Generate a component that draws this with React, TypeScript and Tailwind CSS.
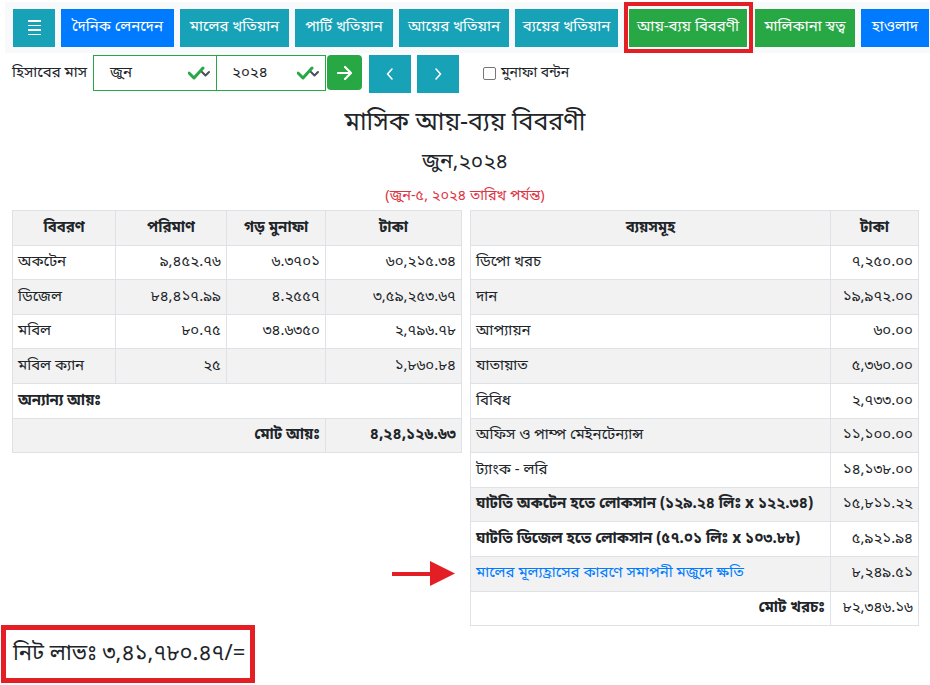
import React from "react";

const FONT = { fontFamily: '"Noto Sans Bengali", "Noto Sans", "Liberation Sans", sans-serif' };

function Check() {
  return (
    <svg width="24" height="14" viewBox="0 0 24 14" className="shrink-0">
      <polyline points="1,7 6,12 15,2" fill="none" stroke="#28a745" strokeWidth="3" strokeLinecap="round" strokeLinejoin="round" />
      <polyline points="14,6 17.5,9.5 21,6" fill="none" stroke="#495057" strokeWidth="2" strokeLinecap="round" strokeLinejoin="round" />
    </svg>
  );
}

const leftRows = [
  ["অকটেন", "৯,৪৫২.৭৬", "৬.৩৭০১", "৬০,২১৫.৩৪"],
  ["ডিজেল", "৮৪,৪১৭.৯৯", "৪.২৫৫৭", "৩,৫৯,২৫৩.৬৭"],
  ["মবিল", "৮০.৭৫", "৩৪.৬৩৫০", "২,৭৯৬.৭৮"],
  ["মবিল ক্যান", "২৫", "", "১,৮৬০.৮৪"],
];

const rightRows: [string, string, string][] = [
  ["ডিপো খরচ", "৭,২৫০.০০", "n"],
  ["দান", "১৯,৯৭২.০০", "n"],
  ["আপ্যায়ন", "৬০.০০", "n"],
  ["যাতায়াত", "৫,৩৬০.০০", "n"],
  ["বিবিধ", "২,৭৩৩.০০", "n"],
  ["অফিস ও পাম্প মেইনটেন্যান্স", "১১,১০০.০০", "n"],
  ["ট্যাংক - লরি", "১৪,১৩৮.০০", "n"],
  ["ঘাটতি অকটেন হতে লোকসান (১২৯.২৪ লিঃ x ১২২.৩৪)", "১৫,৮১১.২২", "b"],
  ["ঘাটতি ডিজেল হতে লোকসান (৫৭.০১ লিঃ x ১০৩.৮৮)", "৫,৯২১.৯৪", "b"],
  ["মালের মূল্যহ্রাসের কারণে সমাপনী মজুদে ক্ষতি", "৮,২৪৯.৫১", "l"],
];

const cell = "border border-[#dee2e6] px-[5px] h-[34.6px] align-middle";

export default function App() {
  return (
    <div className="w-[930px] h-[685px] overflow-hidden bg-white text-[#212529]" style={FONT}>
      {/* nav */}
      <div className="ml-[5px] mt-[2px] h-[51px] bg-[#f8f9fa] flex items-center pl-[8px] text-white text-[15px] whitespace-nowrap">
        <div className="w-[42px] h-[38px] bg-[#17a2b8] flex flex-col items-center justify-center gap-[3px]">
          <span className="block w-[13px] h-[1.5px] bg-white" />
          <span className="block w-[13px] h-[1.5px] bg-white" />
          <span className="block w-[13px] h-[1.5px] bg-white" />
          <span className="block w-[13px] h-[1.5px] bg-white" />
        </div>
        <div className="ml-[6px] w-[113px] h-[38px] bg-[#007bff] flex items-center justify-center">দৈনিক লেনদেন</div>
        <div className="ml-[6px] w-[109px] h-[38px] bg-[#17a2b8] flex items-center justify-center">মালের খতিয়ান</div>
        <div className="ml-[6px] w-[98px] h-[38px] bg-[#17a2b8] flex items-center justify-center">পার্টি খতিয়ান</div>
        <div className="ml-[6px] w-[110px] h-[38px] bg-[#17a2b8] flex items-center justify-center">আয়ের খতিয়ান</div>
        <div className="ml-[6px] w-[103px] h-[38px] bg-[#17a2b8] flex items-center justify-center">ব্যয়ের খতিয়ান</div>
        <div className="relative ml-[11px] w-[118px] h-[38px] bg-[#28a745] flex items-center justify-center">
          আয়-ব্যয় বিবরণী
          <div className="absolute -left-[5px] -right-[6px] -top-[7px] -bottom-[6px] border-[4px] border-[#e31e24]" />
        </div>
        <div className="ml-[8px] w-[100px] h-[38px] bg-[#28a745] flex items-center justify-center">মালিকানা স্বত্ব</div>
        <div className="ml-[6px] w-[68px] h-[38px] bg-[#007bff] flex items-center justify-center shrink-0">হাওলাদ</div>
      </div>

      {/* filter row */}
      <div className="mt-[2px] flex items-start h-[38px] text-[15px]">
        <div className="ml-[12px] w-[81px] h-[36px] flex items-center">হিসাবের মাস</div>
        <div className="w-[124px] h-[36px] border border-[#28a745] flex items-center justify-between pl-[16px] pr-[4px]">
          <span>জুন</span>
          <Check />
        </div>
        <div className="w-[109px] h-[36px] border border-[#28a745] border-l-0 flex items-center justify-between pl-[15px] pr-[4px]">
          <span>২০২৪</span>
          <Check />
        </div>
        <div className="ml-[1px] w-[35px] h-[35px] rounded-[4px] bg-[#28a745] flex items-center justify-center">
          <svg width="18" height="16" viewBox="0 0 18 16">
            <path d="M2 8h13M9 2l6 6-6 6" fill="none" stroke="white" strokeWidth="2.2" strokeLinecap="round" strokeLinejoin="round" />
          </svg>
        </div>
        <div className="ml-[7px] w-[42px] h-[38px] bg-[#17a2b8] flex items-center justify-center">
          <svg width="10" height="16" viewBox="0 0 10 16">
            <path d="M7 3L2.5 8 7 13" fill="none" stroke="white" strokeWidth="1.6" strokeLinecap="round" strokeLinejoin="round" />
          </svg>
        </div>
        <div className="ml-[6px] w-[42px] h-[38px] bg-[#17a2b8] flex items-center justify-center">
          <svg width="10" height="16" viewBox="0 0 10 16">
            <path d="M3 3l4.5 5L3 13" fill="none" stroke="white" strokeWidth="1.6" strokeLinecap="round" strokeLinejoin="round" />
          </svg>
        </div>
        <label className="ml-[24px] h-[36px] flex items-center gap-[5px] text-[14px]">
          <span className="block w-[13px] h-[13px] border border-[#767676] rounded-[2px] bg-white" />
          মুনাফা বন্টন
        </label>
      </div>

      {/* titles */}
      <div className="text-center">
        <div className="text-[25px] leading-[34px] mt-[14px]">মাসিক আয়-ব্যয় বিবরণী</div>
        <div className="text-[21px] leading-[30px] mt-[7px]">জুন,২০২৪</div>
        <div className="text-[14.5px] leading-[20px] mt-[9px] text-[#dc3545]">(জুন-৫, ২০২৪ তারিখ পর্যন্ত)</div>
      </div>

      {/* tables */}
      <div className="relative flex items-start gap-[8px] pl-[12px] mt-[3px] text-[15px]">
        <table className="w-[449px] border-collapse table-fixed">
          <colgroup>
            <col className="w-[103px]" />
            <col className="w-[111px]" />
            <col className="w-[99px]" />
            <col className="w-[136px]" />
          </colgroup>
          <tbody>
            <tr className="bg-[#f2f2f2] font-bold">
              <td className={`${cell} text-center`}>বিবরণ</td>
              <td className={`${cell} text-center`}>পরিমাণ</td>
              <td className={`${cell} text-center`}>গড় মুনাফা</td>
              <td className={`${cell} text-center`}>টাকা</td>
            </tr>
            {leftRows.map((r, i) => (
              <tr key={i} className={i % 2 === 1 ? "bg-[#f2f2f2]" : "bg-white"}>
                <td className={cell}>{r[0]}</td>
                <td className={`${cell} text-right`}>{r[1]}</td>
                <td className={`${cell} text-right`}>{r[2]}</td>
                <td className={`${cell} text-right`}>{r[3]}</td>
              </tr>
            ))}
            <tr className="bg-white">
              <td colSpan={4} className={`${cell} font-bold`}>অন্যান্য আয়ঃ</td>
            </tr>
            <tr className="bg-[#f2f2f2] font-bold">
              <td colSpan={3} className={`${cell} text-right`}>মোট আয়ঃ</td>
              <td className={`${cell} text-right`}>৪,২৪,১২৬.৬৩</td>
            </tr>
          </tbody>
        </table>

        <table className="w-[448px] border-collapse table-fixed">
          <colgroup>
            <col className="w-[360px]" />
            <col className="w-[88px]" />
          </colgroup>
          <tbody>
            <tr className="bg-[#f2f2f2] font-bold">
              <td className={`${cell} text-center`}>ব্যয়সমূহ</td>
              <td className={`${cell} text-center`}>টাকা</td>
            </tr>
            {rightRows.map((r, i) => (
              <tr key={i} className={i % 2 === 1 ? "bg-[#f2f2f2]" : "bg-white"}>
                <td
                  className={`${cell} whitespace-nowrap ${r[2] === "b" ? "font-bold" : ""} ${r[2] === "l" ? "text-[#007bff]" : ""}`}
                >
                  {r[0]}
                </td>
                <td className={`${cell} text-right`}>{r[1]}</td>
              </tr>
            ))}
            <tr className="bg-white">
              <td className={`${cell} text-right font-bold`}>মোট খরচঃ</td>
              <td className={`${cell} text-right`}>৮২,৩৪৬.১৬</td>
            </tr>
          </tbody>
        </table>

        {/* red arrow annotation */}
        <svg className="absolute left-[392px] top-[351px]" width="64" height="26" viewBox="0 0 64 26">
          <rect x="0" y="11" width="40" height="4" fill="#e31e24" />
          <polygon points="38,0 63,12.5 38,25" fill="#e31e24" />
        </svg>
      </div>

      {/* net profit */}
      <div className="ml-[1px] -mt-[1px] w-[254px] h-[58px] border-[5px] border-[#e31e24] flex items-center pl-[7px] text-[22px] whitespace-nowrap">
        নিট লাভঃ ৩,৪১,৭৮০.৪৭/=
      </div>
    </div>
  );
}
